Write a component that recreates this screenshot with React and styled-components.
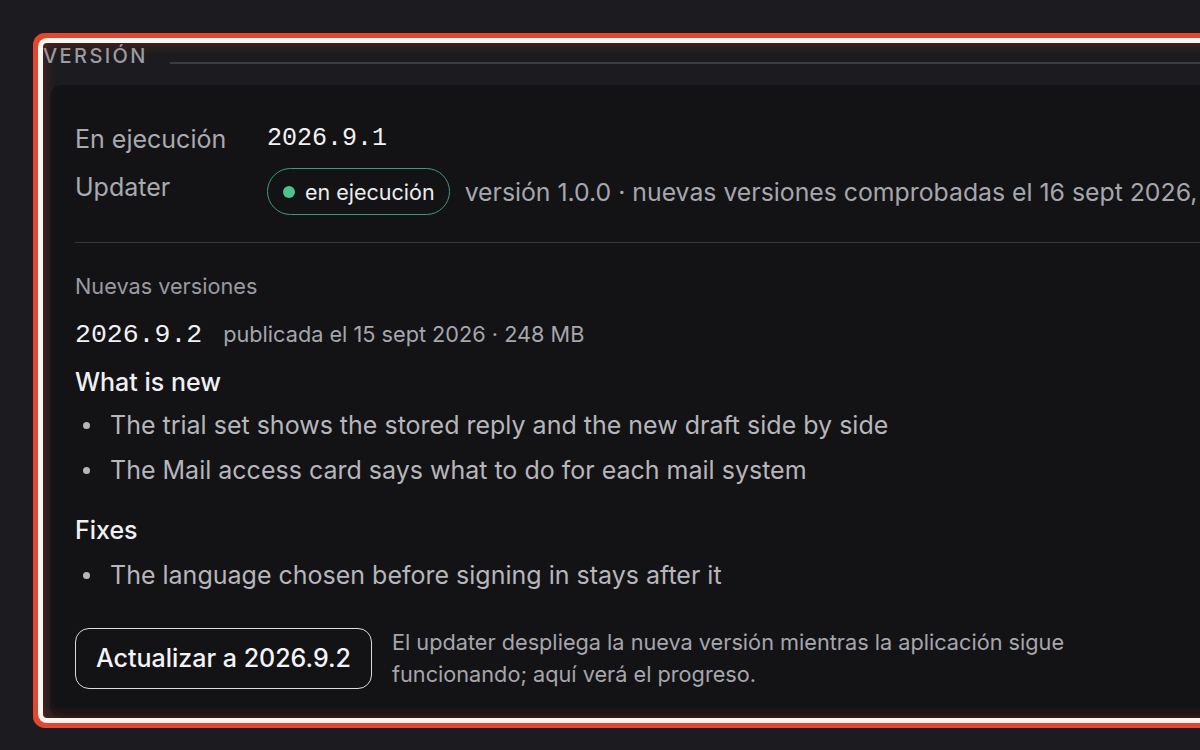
import React from 'react';
import styled, { createGlobalStyle } from 'styled-components';

const GlobalStyle = createGlobalStyle`
  html, body {
    margin: 0;
    padding: 0;
    background: #1c1c20;
  }

  body {
    font-family: Inter, "Noto Sans", sans-serif;
    -webkit-font-smoothing: antialiased;
  }
`;

const Page = styled.div`
  width: 1200px;
  height: 750px;
  overflow: hidden;
  background: #1c1c20;
  padding: 43px 0 0 43px;
  box-sizing: border-box;
`;

const Section = styled.section`
  position: relative;
  width: 1400px;
  height: 675px;
  display: flex;
  flex-direction: column;

  &::after {
    content: '';
    position: absolute;
    inset: 0;
    pointer-events: none;
    border-radius: 4px;
    box-shadow:
      0 0 0 5px #fbf4f1,
      0 0 0 10px #e0492f,
      inset 0 0 14px rgba(210, 70, 45, 0.35);
  }
`;

const LegendRow = styled.div`
  display: flex;
  align-items: center;
  height: 26px;
  gap: 22px;
`;

const Legend = styled.h2`
  margin: 0;
  font-size: 20px;
  font-weight: 500;
  letter-spacing: 2.4px;
  color: #9c9ca3;
  text-transform: uppercase;
  line-height: 26px;
`;

const LegendLine = styled.div`
  flex: 1;
  height: 1.5px;
  margin-top: 14px;
  background: #3b3b42;
`;

const Card = styled.div`
  flex: 1;
  margin: 16px 0 0 7px;
  padding: 38px 25px 0;
  background: #131316;
  border-radius: 12px;
`;

const Facts = styled.div`
  display: grid;
  grid-template-columns: 192px 1fr;
  row-gap: 13px;
  align-items: start;
`;

const Label = styled.div`
  font-size: 25px;
  line-height: 32px;
  color: #a9a9b0;
  padding-top: ${({ offset }) => offset || 0}px;
`;

const Mono = styled.span`
  font-family: "Liberation Mono", "DejaVu Sans Mono", monospace;
  font-size: ${({ size }) => size || 25}px;
  color: #f2f2f4;
  line-height: 32px;
`;

const StatusLine = styled.div`
  display: flex;
  align-items: center;
  gap: 15px;
  white-space: nowrap;
`;

const Badge = styled.span`
  display: inline-flex;
  align-items: center;
  gap: 10px;
  height: 47px;
  padding: 0 14px 0 15px;
  box-sizing: border-box;
  border: 1.5px solid #3f9a76;
  border-radius: 24px;
  font-size: 21.5px;
  color: #ececef;
`;

const Dot = styled.span`
  width: 12px;
  height: 12px;
  border-radius: 50%;
  background: #4cc38a;
`;

const Muted = styled.span`
  font-size: ${({ size }) => size || 24.8}px;
  color: #a6a6ad;
`;

const Divider = styled.hr`
  margin: 27px 0 0;
  border: none;
  height: 1px;
  background: #36363c;
`;

const SubTitle = styled.div`
  margin-top: 29px;
  font-size: 21.7px;
  line-height: 28px;
  color: #9a9aa1;
`;

const Release = styled.div`
  margin-top: 17px;
  display: flex;
  align-items: baseline;
  gap: 21px;
  line-height: 34px;
`;

const Heading = styled.h3`
  margin: ${({ gap }) => gap}px 0 0;
  font-size: 25px;
  font-weight: 500;
  line-height: 30px;
  color: #f0f0f2;
`;

const List = styled.ul`
  margin: ${({ gap }) => gap}px 0 0;
  padding: 0;
  list-style: none;
  display: flex;
  flex-direction: column;
  gap: 13px;
`;

const Item = styled.li`
  position: relative;
  padding-left: 35px;
  font-size: 25px;
  line-height: 32px;
  color: #b6b6bb;

  &::before {
    content: '';
    position: absolute;
    left: 8px;
    top: 13px;
    width: 7px;
    height: 7px;
    border-radius: 50%;
    background: #b6b6bb;
  }
`;

const Actions = styled.div`
  margin-top: 35px;
  display: flex;
  align-items: center;
  gap: 20px;
`;

const UpdateButton = styled.button`
  height: 61px;
  padding: 0 20px;
  background: transparent;
  border: 1.5px solid #dcdcde;
  border-radius: 14px;
  font-family: Inter, sans-serif;
  font-size: 25px;
  font-weight: 500;
  color: #f4f4f6;
  cursor: pointer;
  white-space: nowrap;
`;

const Hint = styled.p`
  margin: 0;
  width: 700px;
  font-size: 21.7px;
  line-height: 32px;
  color: #a6a6ad;
`;

const whatsNew = [
  'The trial set shows the stored reply and the new draft side by side',
  'The Mail access card says what to do for each mail system',
];

const fixes = ['The language chosen before signing in stays after it'];

export default function App() {
  return (
    <>
      <GlobalStyle />
      <Page>
        <Section>
          <LegendRow>
            <Legend>Versión</Legend>
            <LegendLine />
          </LegendRow>
          <Card>
            <Facts>
              <Label>En ejecución</Label>
              <Mono>2026.9.1</Mono>
              <Label offset={3}>Updater</Label>
              <StatusLine>
                <Badge>
                  <Dot />
                  en ejecución
                </Badge>
                <Muted>versión 1.0.0 · nuevas versiones comprobadas el 16 sept 2026, 08:00</Muted>
              </StatusLine>
            </Facts>
            <Divider />
            <SubTitle>Nuevas versiones</SubTitle>
            <Release>
              <Mono size={26.5}>2026.9.2</Mono>
              <Muted size={21.7}>publicada el 15 sept 2026 · 248 MB</Muted>
            </Release>
            <Heading gap={16}>What is new</Heading>
            <List gap={12}>
              {whatsNew.map(text => (
                <Item key={text}>{text}</Item>
              ))}
            </List>
            <Heading gap={29}>Fixes</Heading>
            <List gap={14}>
              {fixes.map(text => (
                <Item key={text}>{text}</Item>
              ))}
            </List>
            <Actions>
              <UpdateButton>Actualizar a 2026.9.2</UpdateButton>
              <Hint>
                El updater despliega la nueva versión mientras la aplicación sigue
                funcionando; aquí verá el progreso.
              </Hint>
            </Actions>
          </Card>
        </Section>
      </Page>
    </>
  );
}
